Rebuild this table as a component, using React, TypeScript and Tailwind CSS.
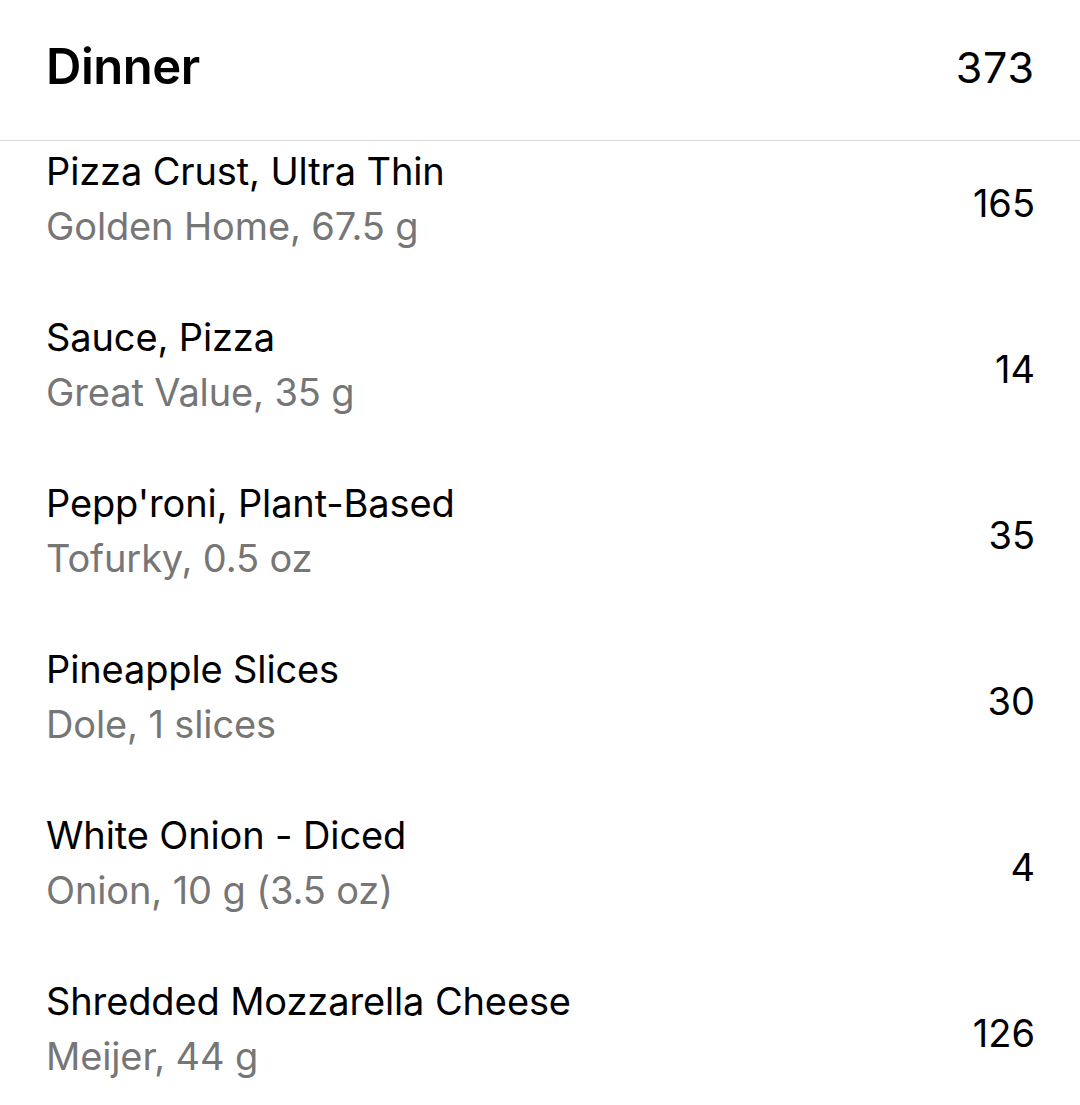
const items = [
  { name: "Pizza Crust, Ultra Thin", detail: "Golden Home, 67.5 g", cal: 165 },
  { name: "Sauce, Pizza", detail: "Great Value, 35 g", cal: 14 },
  { name: "Pepp'roni, Plant-Based", detail: "Tofurky, 0.5 oz", cal: 35 },
  { name: "Pineapple Slices", detail: "Dole, 1 slices", cal: 30 },
  { name: "White Onion - Diced", detail: "Onion, 10 g (3.5 oz)", cal: 4 },
  { name: "Shredded Mozzarella Cheese", detail: "Meijer, 44 g", cal: 126 },
];

export default function App() {
  return (
    <main className="min-h-screen bg-white font-['Inter',sans-serif] text-black">
      <header className="flex h-[141px] items-center justify-between border-b border-[#d9d9d9] pb-[6px] pl-[46px] pr-[45px]">
        <h1 className="text-[49px] font-semibold tracking-[-0.01em]">Dinner</h1>
        <span className="text-[43px] tracking-[0.02em]">373</span>
      </header>

      <ul className="flex flex-col gap-[56px] pt-[3px]">
        {items.map((item) => (
          <li key={item.name} className="flex h-[110px] items-center justify-between pl-[46px] pr-[45px]">
            <div className="flex flex-col tracking-[-0.008em]">
              <span className="text-[38px] leading-[55px]">{item.name}</span>
              <span className="text-[38px] leading-[55px] text-[#767676]">{item.detail}</span>
            </div>
            <span className="pt-[9px] text-[38px]">{item.cal}</span>
          </li>
        ))}
      </ul>
    </main>
  );
}
